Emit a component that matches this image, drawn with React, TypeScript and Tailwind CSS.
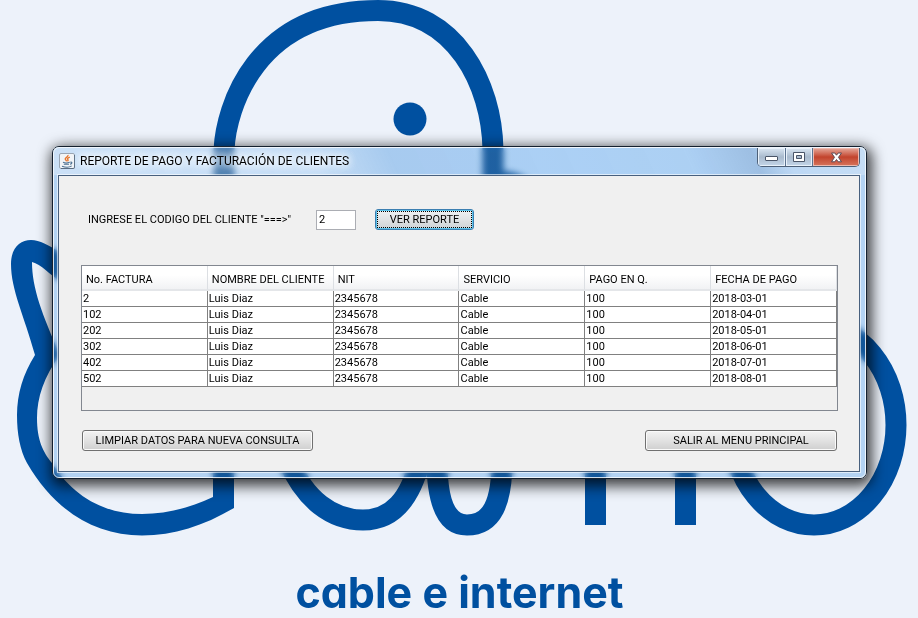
import React from "react";

const columns = ["No. FACTURA", "NOMBRE DEL CLIENTE", "NIT", "SERVICIO", "PAGO EN Q.", "FECHA DE PAGO"];

const rows = [
  ["2", "Luis Diaz", "2345678", "Cable", "100", "2018-03-01"],
  ["102", "Luis Diaz", "2345678", "Cable", "100", "2018-04-01"],
  ["202", "Luis Diaz", "2345678", "Cable", "100", "2018-05-01"],
  ["302", "Luis Diaz", "2345678", "Cable", "100", "2018-06-01"],
  ["402", "Luis Diaz", "2345678", "Cable", "100", "2018-07-01"],
  ["502", "Luis Diaz", "2345678", "Cable", "100", "2018-08-01"],
];

function Wallpaper() {
  return (
    <svg
      className="absolute inset-0 h-full w-full"
      viewBox="0 0 918 618"
      preserveAspectRatio="xMidYMid slice"
      aria-hidden="true"
    >
      <g fill="none" stroke="#0050a0" strokeWidth="21">
        <path d="M224 200V150C226 108 255 10.5 378 10.5C455 10.5 492 84 493 150V200" />
        <path d="M288 460C305 500 332 520 363 520C392 520 410 500 420 460" />
        <path d="M437 460C437 505 447 525 467 525C492 525 502 503 502 460" />
        <path d="M595.5 450V525M685.5 450V525" />
        <ellipse cx="814" cy="425" rx="82" ry="100" />
      </g>
      <g fill="#0050a0">
        <circle cx="410" cy="119" r="16.5" />
        <path d="M503 171C514 172 522 175 530 180H503Z" />
        <path d="M35 355C24 315 11 290 11 264C11 248 20 240 31 240C40 240 48 245 60 252V281C50 275 41 264 32 262C32 288 42 314 60 355C44 376 37 398 37 418C37 440 43 452 52 463C74 498 106 514 142 514C166 514 190 508 213 497V460H234V508C203 526 174 535.500 142 535.500C95 535.500 55 511 27 463C20 450 17 434 17 415C17 394 23 374 35 355Z" />
      </g>
    </svg>
  );
}

function JavaIcon() {
  return (
    <svg className="h-4 w-4 shrink-0" viewBox="0 0 16 16" aria-hidden="true">
      <rect x=".5" y=".5" width="15" height="15" rx="1.500" fill="#f1f4f7" stroke="#9aa6b4" />
      <path d="M15.500 2V14.500Q15.500 15.500 14.500 15.500H2" fill="none" stroke="#5b6d82" />
      <path d="M9 2C9.500 4 5.500 4.700 6.300 6.300C6.600 7 7.400 7.500 7.600 8.300M10.800 4.200C8.500 5 8.200 5.800 8.900 6.700C9.300 7.300 9 7.900 8.500 8.300" fill="none" stroke="#e8762c" strokeWidth="1.400" />
      <path d="M4 9.300C5.500 10 9 10 10.700 9.300M4.800 11.200H10M3 13.200C6 14.300 10.500 14.300 12.700 12.900M11.300 9.200C13.600 8.700 13.300 10.900 11 11.300" fill="none" stroke="#4d7191" strokeWidth="1.100" />
    </svg>
  );
}

function CaptionButtons() {
  return (
    <div className="mr-[5px] flex h-[19px] overflow-hidden rounded-b-[5px] border border-t-0 border-[#4d6078]">
      <button
        aria-label="Minimizar"
        className="flex w-7 items-center justify-center border-r border-[#5c7390] bg-linear-to-b from-[#dbe7f3] from-0% via-[#a9bacd] via-50% to-[#c4d6e9] shadow-[inset_0_0_0_1px_#e8f1fa]"
      >
        <svg width="13" height="10" viewBox="0 0 13 10" aria-hidden="true">
          <rect x=".5" y="4.500" width="12" height="4" rx=".5" fill="#fff" stroke="#4a5568" />
        </svg>
      </button>
      <button
        aria-label="Restaurar"
        className="flex w-[27px] items-center justify-center border-r border-[#5c7390] bg-linear-to-b from-[#dbe7f3] from-0% via-[#a9bacd] via-50% to-[#c4d6e9] shadow-[inset_0_0_0_1px_#e8f1fa]"
      >
        <svg width="13" height="11" viewBox="0 0 13 11" aria-hidden="true">
          <path d="M.5.5H11.500V9.500H.5ZM3.500 3.500V6.500H8.500V3.500Z" fill="#fff" fillRule="evenodd" stroke="#4a5568" />
        </svg>
      </button>
      <button
        aria-label="Cerrar"
        className="flex w-[46px] items-center justify-center bg-linear-to-b from-[#e5a99c] from-0% via-[#c2432c] via-50% to-[#d6745c] shadow-[inset_0_0_0_1px_#edb9ae]"
      >
        <svg width="13" height="11" viewBox="0 0 13 11" aria-hidden="true">
          <path
            d="M1.500 1H4.800L6.500 3.200L8.200 1H11.500L8.500 5.300L11.500 9.800H8.200L6.500 7.500L4.800 9.800H1.500L4.500 5.300Z"
            fill="#fff"
            stroke="#5b4a55"
          />
        </svg>
      </button>
    </div>
  );
}

function TitleBar() {
  return (
    <header className="flex h-[27px] items-start justify-between bg-[linear-gradient(65deg,rgba(255,255,255,0.3)_0%,rgba(255,255,255,0.25)_32%,rgba(90,150,215,0.15)_42%,rgba(110,185,255,0.12)_60%,rgba(110,185,255,0.1)_78%,rgba(80,120,170,0.22)_86%,rgba(255,255,255,0.12)_90%,rgba(255,255,255,0.25)_100%)]">
      <div className="flex items-center gap-[5px] pt-[5px] pl-[5px]">
        <JavaIcon />
        <h1 className="font-['Roboto','Noto_Sans',sans-serif] text-[12px] leading-4 whitespace-nowrap text-black [text-shadow:0_0_6px_#fff,0_0_8px_#fff,0_0_10px_#fff]">
          REPORTE DE PAGO Y FACTURACIÓN DE CLIENTES
        </h1>
      </div>
      <CaptionButtons />
    </header>
  );
}

function ActionButton({ children, className }: { children: React.ReactNode; className: string }) {
  return (
    <button
      className={`h-[21px] rounded-[3px] border border-[#707070] bg-linear-to-b from-[#f3f3f3] from-0% via-[#e2e2e2] via-50% to-[#cfcfcf] text-center leading-[17px] whitespace-nowrap shadow-[inset_0_0_0_1px_#fafafa] ${className}`}
    >
      {children}
    </button>
  );
}

function InvoiceTable() {
  return (
    <div className="h-[146px] border border-[#828790]">
      <table className="w-full table-fixed border-separate border-spacing-0">
        <thead>
          <tr className="h-[25px]">
            {columns.map((name) => (
              <th
                key={name}
                className="border-r border-b-2 border-r-[#dcdfe3] border-b-[#e4e6e9] bg-linear-to-b from-white from-40% to-[#f1f2f4] px-1 py-0 pt-[5px] text-left leading-4 font-normal whitespace-nowrap"
              >
                {name}
              </th>
            ))}
          </tr>
        </thead>
        <tbody>
          {rows.map((row) => (
            <tr key={row[0]} className="h-4">
              {row.map((cell, i) => (
                <td
                  key={columns[i]}
                  className="border-r border-b border-[#808080] bg-white p-0 pl-px leading-[15px] whitespace-nowrap"
                >
                  {cell}
                </td>
              ))}
            </tr>
          ))}
        </tbody>
      </table>
    </div>
  );
}

export default function App() {
  return (
    <main className="relative flex min-h-screen flex-col bg-[#edf2fa] pt-[146px] pr-[51px] pl-[52px] font-['Roboto','Noto_Sans',sans-serif] text-[11px] text-black">
      <Wallpaper />
      <section className="relative rounded-[7px] border border-[#14202e] bg-[#0576e6]/25 shadow-[2px_4px_14px_3px_rgba(0,0,0,0.75)] backdrop-blur-[3px] backdrop-saturate-60">
        <div className="rounded-[6px] border border-white/80 pb-[5px]">
          <TitleBar />
          <div className="mr-[5px] ml-1 border border-[#48607e] bg-[#f0f0f0] pt-[33px] pr-[21px] pb-[20px] pl-[22px] shadow-[0_0_0_1px_rgba(255,255,255,0.6)]">
            <form className="flex items-center pl-[7px]" onSubmit={(e) => e.preventDefault()}>
              <label htmlFor="codigo" className="w-[228px] leading-4 whitespace-nowrap">
                INGRESE EL CODIGO DEL CLIENTE "===&gt;"
              </label>
              <input
                id="codigo"
                defaultValue="2"
                className="mr-[19px] h-5 w-10 border border-[#abadb3] bg-white px-[2px] leading-4 outline-none"
              />
              <button className="h-[21px] w-[99px] rounded-[3px] border border-[#3c7fb1] bg-linear-to-b from-[#f0f2f3] from-0% via-[#e0e3e5] via-50% to-[#cdd2d5] p-px leading-[15px] whitespace-nowrap shadow-[inset_0_0_0_1px_#5cc4ec]">
                <span className="block border border-dotted border-black">VER REPORTE</span>
              </button>
            </form>
            <div className="pt-[35px]">
              <InvoiceTable />
            </div>
            <div className="flex justify-between px-px pt-[19px]">
              <ActionButton className="w-[231px]">LIMPIAR DATOS PARA NUEVA CONSULTA</ActionButton>
              <ActionButton className="w-[192px]">SALIR AL MENU PRINCIPAL</ActionButton>
            </div>
          </div>
        </div>
      </section>
      <p className="relative pt-[87px] text-center font-['Inter',sans-serif] text-[43px] leading-[52px] font-bold text-[#0050a0] [font-feature-settings:'cv11']">
        cable e internet
      </p>
    </main>
  );
}
